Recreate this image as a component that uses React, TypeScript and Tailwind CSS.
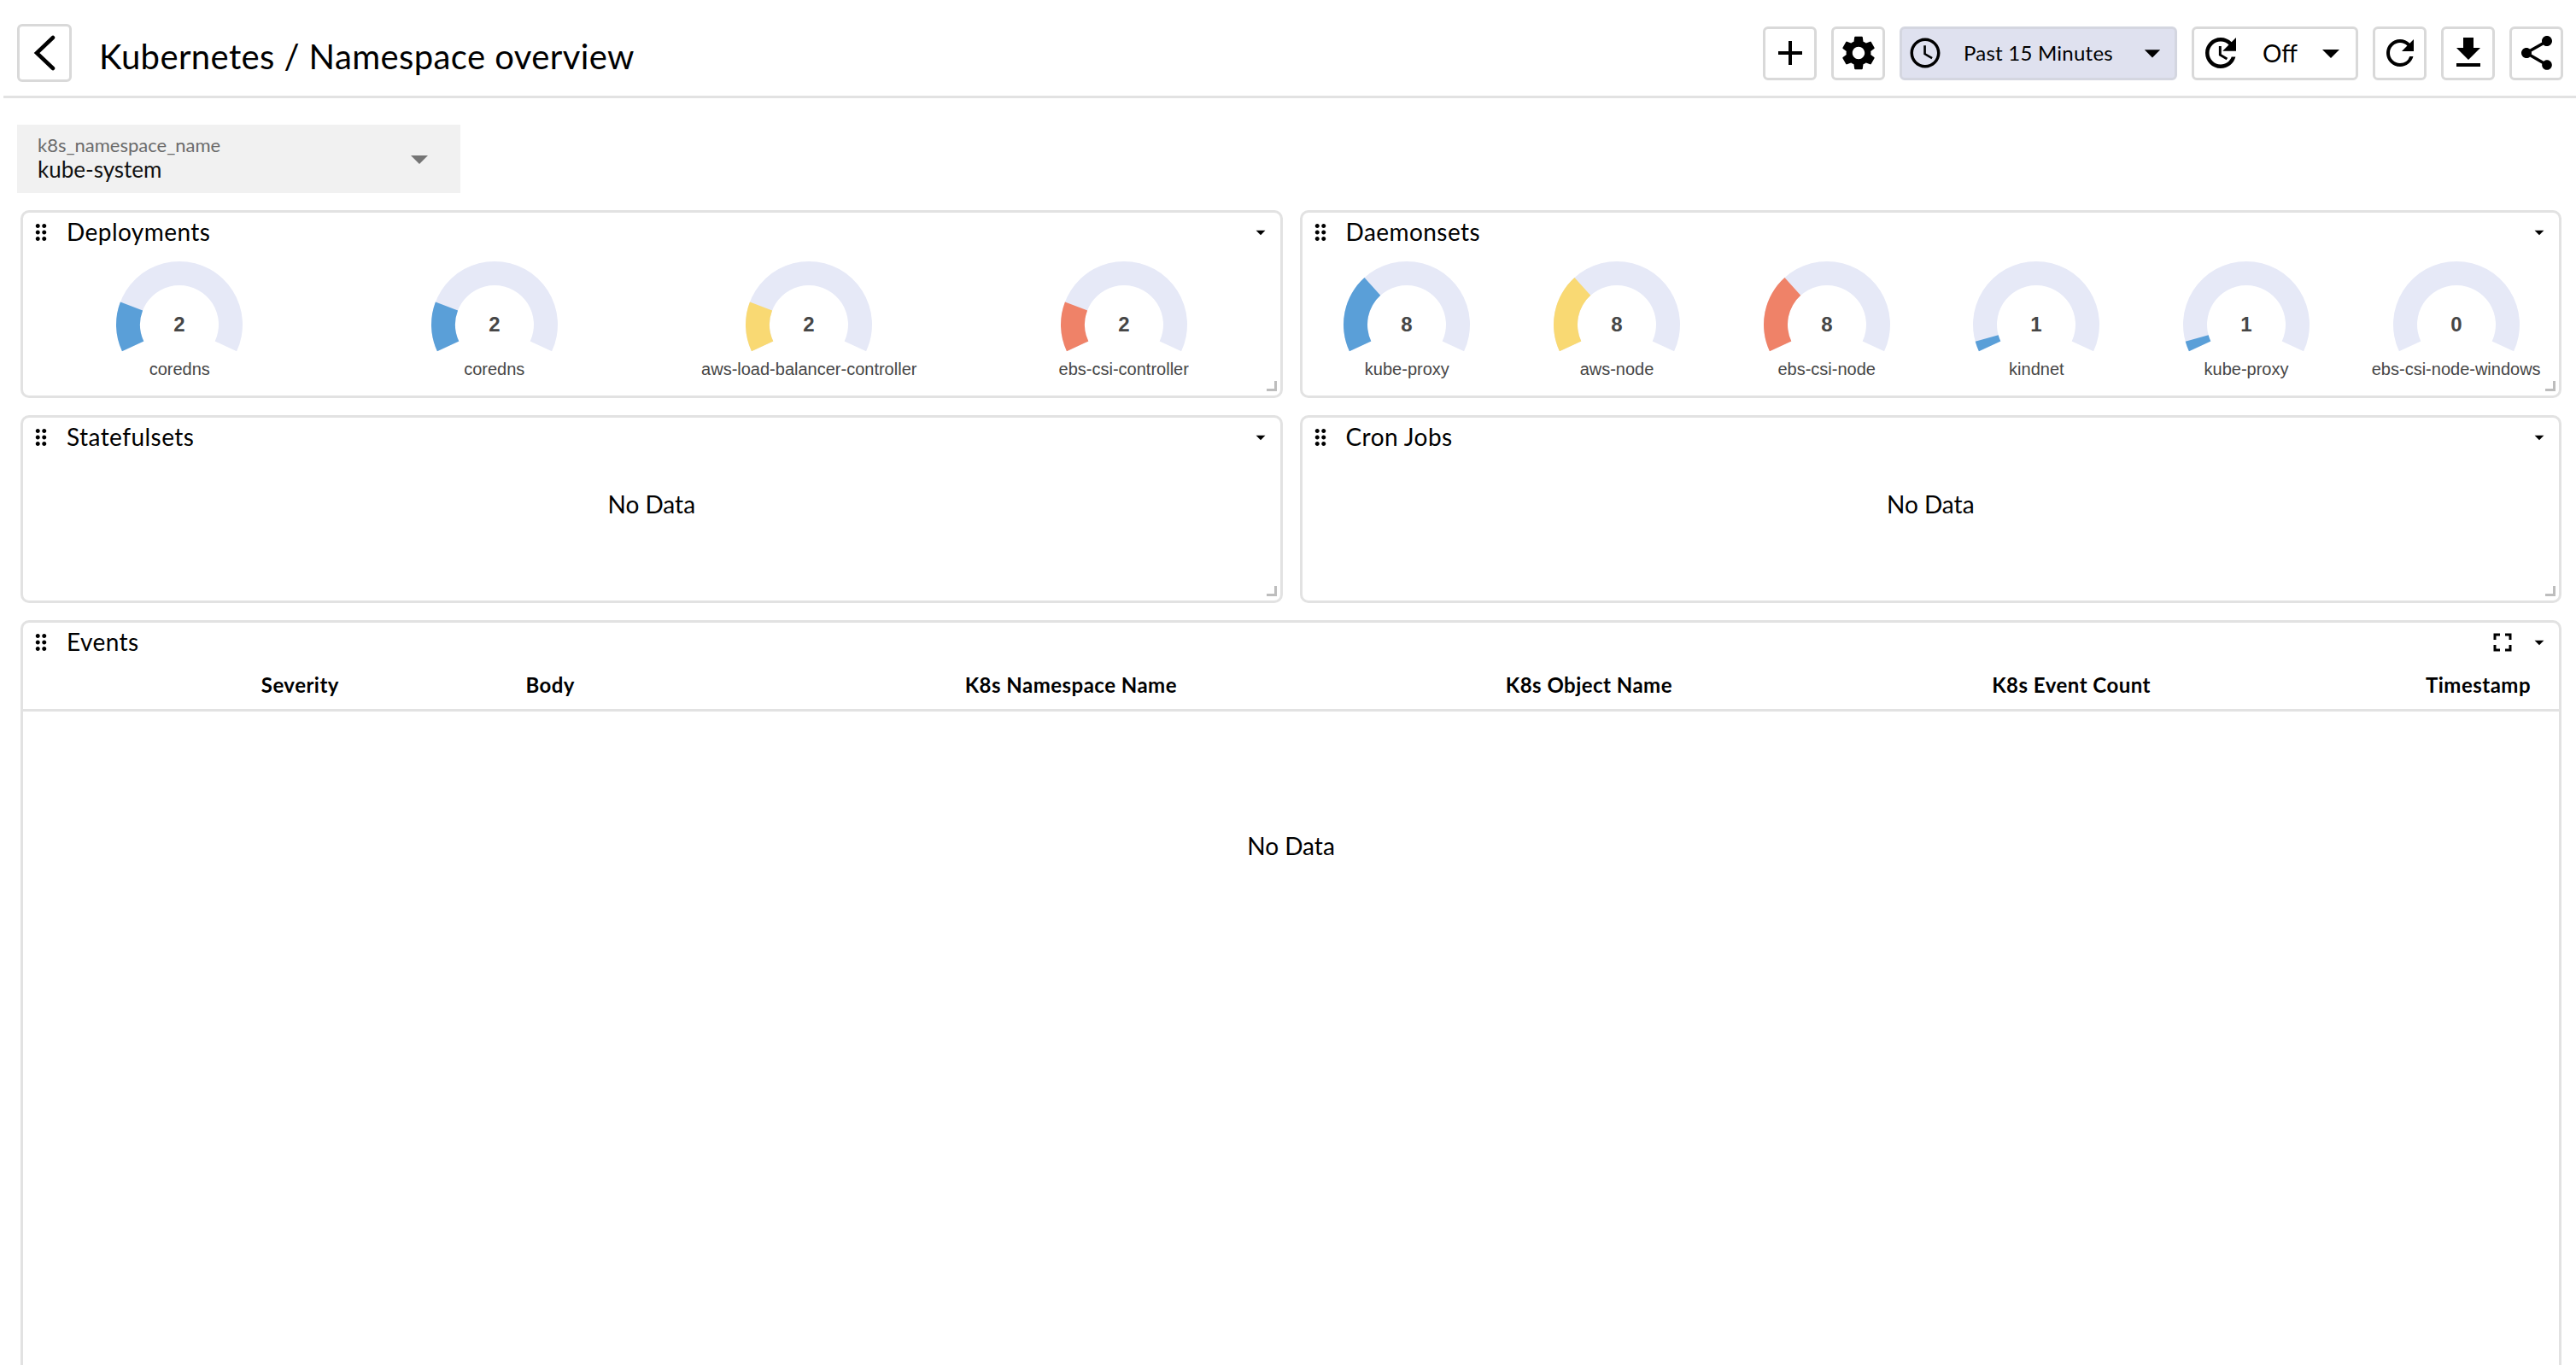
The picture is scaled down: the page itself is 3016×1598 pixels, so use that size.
import React from "react";
import {
  MdAccessTime,
  MdAdd,
  MdArrowDropDown,
  MdDragIndicator,
  MdFileDownload,
  MdFullscreen,
  MdRefresh,
  MdSettings,
  MdShare,
} from "react-icons/md";

const BLUE = "#5a9fd8";
const YELLOW = "#f9d973";
const RED = "#ef8268";
const TRACK = "#e6e9f7";

type Gauge = { label: string; value: number; color: string; end: number };

const deployments: Gauge[] = [
  { label: "coredns", value: 2, color: BLUE, end: 21 },
  { label: "coredns", value: 2, color: BLUE, end: 21 },
  { label: "aws-load-balancer-controller", value: 2, color: YELLOW, end: 21 },
  { label: "ebs-csi-controller", value: 2, color: RED, end: 21 },
];

const daemonsets: Gauge[] = [
  { label: "kube-proxy", value: 8, color: BLUE, end: 48 },
  { label: "aws-node", value: 8, color: YELLOW, end: 48 },
  { label: "ebs-csi-node", value: 8, color: RED, end: 48 },
  { label: "kindnet", value: 1, color: BLUE, end: -15.5 },
  { label: "kube-proxy", value: 1, color: BLUE, end: -15.5 },
  { label: "ebs-csi-node-windows", value: 0, color: BLUE, end: -25 },
];

const columns = [
  "Severity",
  "Body",
  "K8s Namespace Name",
  "K8s Object Name",
  "K8s Event Count",
  "Timestamp",
];

// angle runs clockwise from the left horizontal, -25 is the start of the dial
const arcPath = (from: number, to: number) => {
  const cx = 80;
  const cy = 85;
  const point = (r: number, a: number) => {
    const rad = (a * Math.PI) / 180;
    return `${(cx - r * Math.cos(rad)).toFixed(2)} ${(cy - r * Math.sin(rad)).toFixed(2)}`;
  };
  const large = to - from > 180 ? 1 : 0;
  return `M${point(74, from)} A74 74 0 ${large} 1 ${point(74, to)} L${point(46, to)} A46 46 0 ${large} 0 ${point(46, from)} Z`;
};

const GaugeChart = ({ gauge }: { gauge: Gauge }) => (
  <div className="flex flex-1 flex-col items-center">
    <svg width="160" height="120" viewBox="0 0 160 120">
      <path d={arcPath(-25, 205)} fill={TRACK} />
      {gauge.value > 0 && <path d={arcPath(-25, gauge.end)} fill={gauge.color} />}
      <text
        x="80"
        y="93"
        textAnchor="middle"
        fontSize="24"
        fontWeight="700"
        fill="#464646"
        fontFamily="'Liberation Sans', Arial, sans-serif"
      >
        {gauge.value}
      </text>
    </svg>
    <div className="mt-[5px] font-['Liberation_Sans',Arial,sans-serif] text-[20px] leading-[24px] tracking-normal text-[#464646] whitespace-nowrap">
      {gauge.label}
    </div>
  </div>
);

const PanelHeader = ({ title, fullscreen }: { title: string; fullscreen?: boolean }) => (
  <div className="flex h-[46px] items-center pl-[6px] pr-[10px]">
    <MdDragIndicator size={30} className="text-black" />
    <span className="ml-[15px] flex-1 pb-[2px] text-[28px] leading-[40px] tracking-[0.016em] text-black">
      {title}
    </span>
    {fullscreen && <MdFullscreen size={36} className="mr-[12px] text-black" />}
    <MdArrowDropDown size={26} className="text-black" />
  </div>
);

const ResizeHandle = () => (
  <div className="absolute bottom-[5px] right-[4px] h-[12px] w-[12px] border-b-[3px] border-r-[3px] border-[#bdbdbd]" />
);

const Panel = ({ title, children }: { title: string; children: React.ReactNode }) => (
  <div className="relative h-[220px] rounded-[10px] border-[3px] border-[#e2e2e2] bg-white">
    <PanelHeader title={title} />
    {children}
    <ResizeHandle />
  </div>
);

const NoData = ({ className }: { className: string }) => (
  <div className={`text-center text-[28px] leading-[40px] text-black ${className}`}>No Data</div>
);

const IconButton = ({ children }: { children: React.ReactNode }) => (
  <button className="flex h-[63px] w-[63px] items-center justify-center rounded-[6px] border-[3px] border-[#d9d9d9] bg-white text-black">
    {children}
  </button>
);

const AutoRefreshIcon = () => (
  <svg width="54" height="54" viewBox="0 0 24 24" fill="currentColor">
    <path d="M17.65 6.35C16.2 4.9 14.21 4 12 4c-4.42 0-7.99 3.58-7.99 8s3.57 8 7.99 8c3.73 0 6.84-2.55 7.73-6h-2.08c-.82 2.33-3.04 4-5.65 4-3.31 0-6-2.69-6-6s2.69-6 6-6c1.66 0 3.14.69 4.22 1.78L13 11h7V4l-2.35 2.35z" />
    <path d="M11.7 8.4v4.6l3.6 2.1" fill="none" stroke="currentColor" strokeWidth="1.3" />
  </svg>
);

export default function App() {
  return (
    <div className="h-[1598px] w-[3016px] overflow-hidden bg-white font-['Lato','Noto_Sans',sans-serif]">
      <header className="ml-1 flex h-[115px] items-center border-b-[3px] border-[#e2e2e2] pl-4 pr-[15px] pt-[12px]">
        <button className="flex h-[68px] w-[64px] items-center justify-center rounded-[6px] border-[3px] border-[#d9d9d9] bg-white">
          <svg width="28" height="42" viewBox="0 0 28 42" fill="none" stroke="black" strokeWidth="4.5" strokeLinecap="round">
            <path d="M24 3 L5 21 L24 39" />
          </svg>
        </button>
        <h1 className="ml-[32px] flex-1 pt-[7px] text-[40px] leading-[56px] font-normal tracking-[0.01em] text-black">
          Kubernetes / Namespace overview
        </h1>
        <div className="flex items-center gap-[17px]">
          <IconButton>
            <MdAdd size={48} />
          </IconButton>
          <IconButton>
            <MdSettings size={48} />
          </IconButton>
          <button className="flex h-[63px] w-[325px] items-center rounded-[6px] border-[3px] border-[#d4d6e0] bg-[#dfe1ef] pl-[6px] text-black">
            <MdAccessTime size={42} />
            <span className="ml-[24px] text-[24px] tracking-[0.01em]">Past 15 Minutes</span>
            <MdArrowDropDown size={44} className="ml-[24px]" />
          </button>
          <button className="flex h-[63px] w-[195px] items-center rounded-[6px] border-[3px] border-[#d9d9d9] bg-white pl-[4px] text-black">
            <AutoRefreshIcon />
            <span className="ml-[22px] text-[28px]">Off</span>
            <MdArrowDropDown size={48} className="ml-[15px]" />
          </button>
          <IconButton>
            <MdRefresh size={48} />
          </IconButton>
          <IconButton>
            <MdFileDownload size={48} />
          </IconButton>
          <IconButton>
            <MdShare size={48} />
          </IconButton>
        </div>
      </header>

      <div className="ml-5 mt-[31px] flex h-[80px] w-[519px] items-center bg-[#f1f1f1] pl-[24px] pr-[24px]">
        <div className="flex-1 pb-[3px]">
          <div className="text-[22px] leading-[26px] text-[#6b6b6b]">k8s_namespace_name</div>
          <div className="text-[26px] leading-[30px] text-[#111]">kube-system</div>
        </div>
        <MdArrowDropDown size={48} className="text-[#757575]" />
      </div>

      <main className="ml-6 mr-[17px] mt-5 flex flex-col gap-5">
        <div className="grid grid-cols-2 gap-5">
          <Panel title="Deployments">
            <div className="ml-[-1px] flex w-[1474px]">
              {deployments.map((gauge, i) => (
                <GaugeChart key={i} gauge={gauge} />
              ))}
            </div>
          </Panel>
          <Panel title="Daemonsets">
            <div className="flex w-[1474px]">
              {daemonsets.map((gauge, i) => (
                <GaugeChart key={i} gauge={gauge} />
              ))}
            </div>
          </Panel>
        </div>
        <div className="grid grid-cols-2 gap-5">
          <Panel title="Statefulsets">
            <NoData className="pt-[35px]" />
          </Panel>
          <Panel title="Cron Jobs">
            <NoData className="pt-[35px]" />
          </Panel>
        </div>
        <div className="h-[900px] rounded-[10px] border-[3px] border-[#e2e2e2] bg-white">
          <PanelHeader title="Events" fullscreen />
          <div className="grid h-[58px] grid-cols-[370px_276px_705px_580px_560px_445px] items-center border-b-[3px] border-[#e2e2e2] pb-[1px] text-right text-[24px] font-bold tracking-[0.02em] text-black">
            {columns.map((col) => (
              <div key={col}>{col}</div>
            ))}
          </div>
          <NoData className="pt-[137px]" />
        </div>
      </main>
    </div>
  );
}
